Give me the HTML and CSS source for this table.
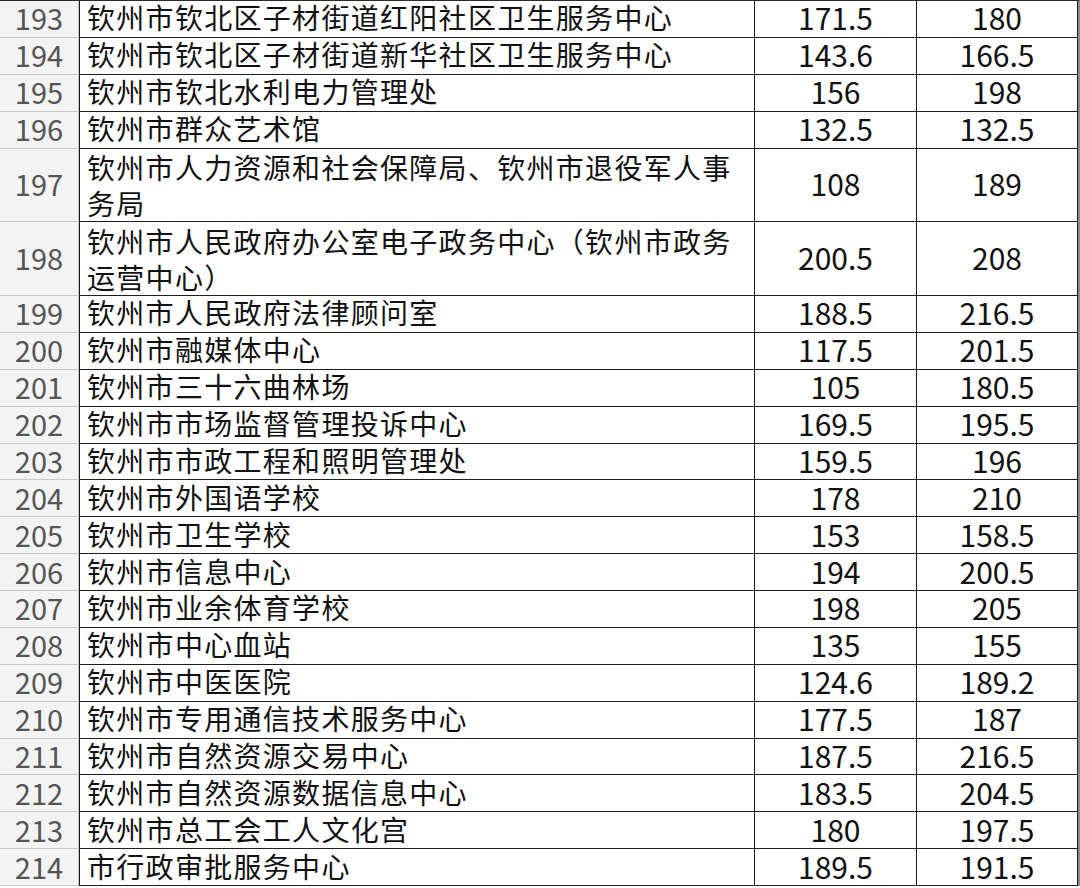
FILE: index.html
```html
<!DOCTYPE html>
<html lang="zh-CN">
<head>
<meta charset="utf-8">
<title>钦州市单位名单</title>
<link rel="stylesheet" href="styles.css">
</head>
<body>
<div class="sheet">
<table class="grid">
<colgroup>
<col class="c-idx"><col class="c-name"><col class="c-num"><col class="c-num2">
</colgroup>
<tbody>
<tr><td class="idx">193</td><td class="name">钦州市钦北区子材街道红阳社区卫生服务中心</td><td class="num">171.5</td><td class="num">180</td></tr>
<tr><td class="idx">194</td><td class="name">钦州市钦北区子材街道新华社区卫生服务中心</td><td class="num">143.6</td><td class="num">166.5</td></tr>
<tr><td class="idx">195</td><td class="name">钦州市钦北水利电力管理处</td><td class="num">156</td><td class="num">198</td></tr>
<tr><td class="idx">196</td><td class="name">钦州市群众艺术馆</td><td class="num">132.5</td><td class="num">132.5</td></tr>
<tr class="tall"><td class="idx">197</td><td class="name">钦州市人力资源和社会保障局、钦州市退役军人事<br>务局</td><td class="num">108</td><td class="num">189</td></tr>
<tr class="tall"><td class="idx">198</td><td class="name">钦州市人民政府办公室电子政务中心（钦州市政务<br>运营中心）</td><td class="num">200.5</td><td class="num">208</td></tr>
<tr><td class="idx">199</td><td class="name">钦州市人民政府法律顾问室</td><td class="num">188.5</td><td class="num">216.5</td></tr>
<tr><td class="idx">200</td><td class="name">钦州市融媒体中心</td><td class="num">117.5</td><td class="num">201.5</td></tr>
<tr><td class="idx">201</td><td class="name">钦州市三十六曲林场</td><td class="num">105</td><td class="num">180.5</td></tr>
<tr><td class="idx">202</td><td class="name">钦州市市场监督管理投诉中心</td><td class="num">169.5</td><td class="num">195.5</td></tr>
<tr><td class="idx">203</td><td class="name">钦州市市政工程和照明管理处</td><td class="num">159.5</td><td class="num">196</td></tr>
<tr><td class="idx">204</td><td class="name">钦州市外国语学校</td><td class="num">178</td><td class="num">210</td></tr>
<tr><td class="idx">205</td><td class="name">钦州市卫生学校</td><td class="num">153</td><td class="num">158.5</td></tr>
<tr><td class="idx">206</td><td class="name">钦州市信息中心</td><td class="num">194</td><td class="num">200.5</td></tr>
<tr><td class="idx">207</td><td class="name">钦州市业余体育学校</td><td class="num">198</td><td class="num">205</td></tr>
<tr><td class="idx">208</td><td class="name">钦州市中心血站</td><td class="num">135</td><td class="num">155</td></tr>
<tr><td class="idx">209</td><td class="name">钦州市中医医院</td><td class="num">124.6</td><td class="num">189.2</td></tr>
<tr><td class="idx">210</td><td class="name">钦州市专用通信技术服务中心</td><td class="num">177.5</td><td class="num">187</td></tr>
<tr><td class="idx">211</td><td class="name">钦州市自然资源交易中心</td><td class="num">187.5</td><td class="num">216.5</td></tr>
<tr><td class="idx">212</td><td class="name">钦州市自然资源数据信息中心</td><td class="num">183.5</td><td class="num">204.5</td></tr>
<tr><td class="idx">213</td><td class="name">钦州市总工会工人文化宫</td><td class="num">180</td><td class="num">197.5</td></tr>
<tr><td class="idx">214</td><td class="name">市行政审批服务中心</td><td class="num">189.5</td><td class="num">191.5</td></tr>
</tbody>
</table>
</div>
</body>
</html>
```
FILE: styles.css
```css
html, body {
  margin: 0;
  padding: 0;
  background: #ffffff;
}

.sheet {
  width: 1080px;
  height: 888px;
  overflow: hidden;
  background: #ffffff;
}

.grid {
  table-layout: fixed;
  width: 1078px;
  border-collapse: separate;
  border-spacing: 0;
  border-top: 1px solid #2a2a2a;
  border-right: 2px solid #8a8a8a;
  font-family: "Noto Sans CJK SC", sans-serif;
  color: #111111;
  line-height: 28px;
}

.c-idx { width: 79px; }
.c-name { width: 676px; }
.c-num { width: 162px; }
.c-num2 { width: 161px; }

.grid tr {
  height: 36.875px;
}

.grid tr.tall {
  height: 73.75px;
}

.grid td {
  padding: 0 0 3px 0;
  border-bottom: 1px solid #1e1e1e;
  border-right: 1px solid #1e1e1e;
  vertical-align: middle;
  line-height: 28px;
  white-space: nowrap;
}

.grid td.idx {
  background: #f3f3f3;
  color: #555555;
  border-bottom-color: #c9c9c9;
  border-right-color: #bdbdbd;
  text-align: center;
  font-family: "Liberation Sans Narrow", "Noto Sans CJK SC", sans-serif;
  font-size: 29px;
}

.grid td.name {
  padding-left: 7px;
  font-size: 28px;
  letter-spacing: 1.3px;
  border-left: 1px solid #1e1e1e;
}

.grid tr.tall td.name {
  padding-bottom: 0;
  line-height: 36px;
}

.grid td.num {
  text-align: center;
  font-family: "Liberation Sans Narrow", "Noto Sans CJK SC", sans-serif;
  font-size: 30px;
}
```
